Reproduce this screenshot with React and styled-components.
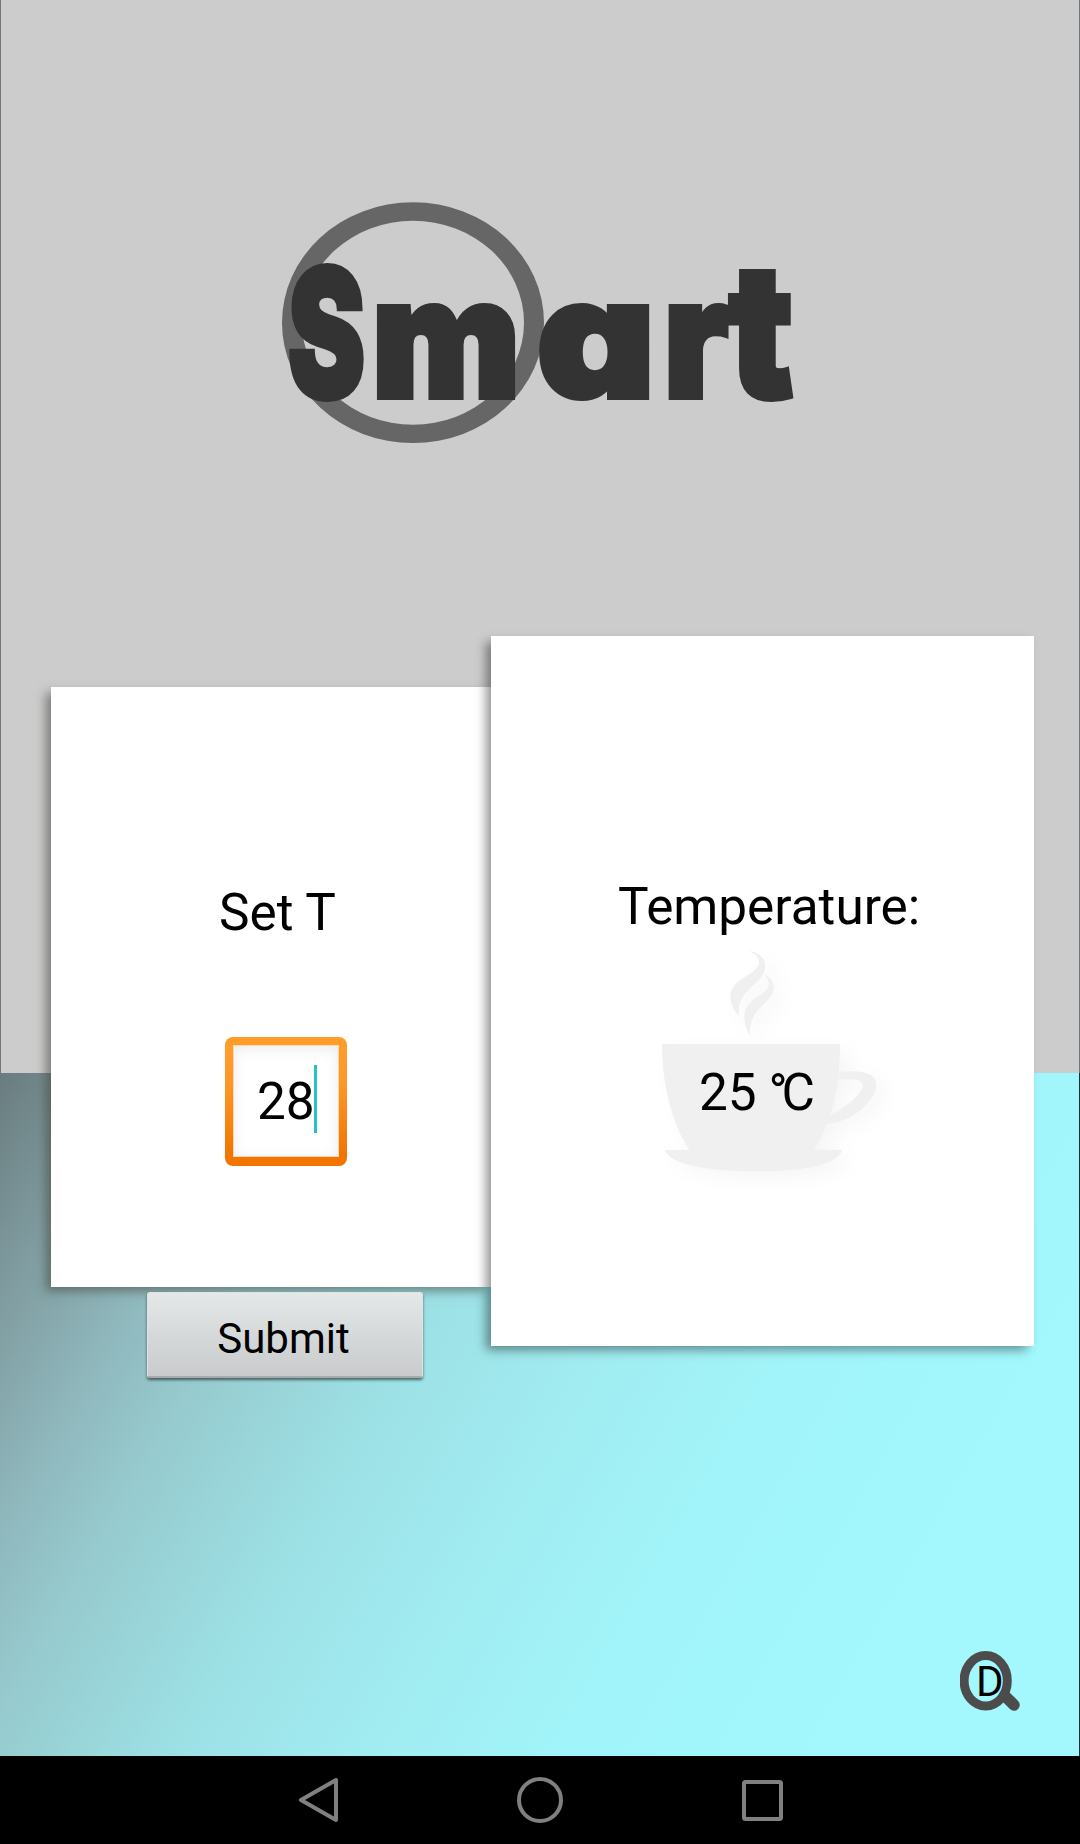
import React from "react";
import styled, { createGlobalStyle } from "styled-components";

const GlobalStyle = createGlobalStyle`
  * { box-sizing: border-box; }
  body { margin: 0; background: #000; font-family: Roboto, "Noto Sans CJK SC", sans-serif; color: #000; }
  svg { display: block; flex: none; }
`;

const Page = styled.div`
  width: 1080px;
  height: 1844px;
  display: flex;
  flex-direction: column;
  overflow: hidden;
`;

const Stage = styled.main`
  height: 1756px;
  flex: none;
  display: flex;
  flex-direction: column;
  padding: 0 1px;
  background:
    linear-gradient(#717576, #717576) left top / 1px 1073px no-repeat,
    linear-gradient(#717576 1073px, #1b3034 1073px) right top / 1px 100% no-repeat,
    linear-gradient(#ccc, #ccc) top / 100% 1073px no-repeat,
    linear-gradient(120deg, #697c7f 0%, #809ca0 9%, #8fb8bd 18%, #96cace 25%, #9ce0e4 38%, #a0ebf0 50%, #a1f5fa 66%, #a2f8fd 84%) bottom / 100% 683px no-repeat;
`;

const Header = styled.header`
  height: 636px;
  padding: 195px 0 0 275px;
`;

const Wordmark = styled.text`
  font-family: Inter, sans-serif;
  font-weight: 900;
  font-size: 165px;
  font-feature-settings: "cv11" 1;
  fill: #333;
  stroke: #333;
  stroke-width: 6px;
`;

const Tall = styled.tspan`
  font-size: ${(p) => p.$size}px;
`;

const Panels = styled.div`
  display: flex;
  align-items: flex-start;
  padding-left: 50px;
`;

const Column = styled.section`
  width: 440px;
  padding-top: 51px;
`;

const Card = styled.div`
  position: relative;
  width: ${(p) => p.$width}px;
  height: ${(p) => p.$height}px;
  padding-top: ${(p) => p.$top}px;
  background: #fff;
  box-shadow: -6px 5px 10px -1px ${(p) => p.$shadow};
`;

const Label = styled.div`
  font-size: 51.3px;
  line-height: 60px;
  white-space: nowrap;
  margin-left: ${(p) => p.$left}px;
`;

const Field = styled.div`
  width: 122px;
  height: 129px;
  margin: 94px 0 0 174px;
  padding: 8px;
  border-radius: 8px;
  background: linear-gradient(#ff9d2b, #fd9827 35%, #f27502 90%);
`;

const FieldInner = styled.div`
  height: 112px;
  padding-left: 23px;
  display: flex;
  align-items: center;
  border: 1px solid #f8d9b4;
  background: #fff;
  box-shadow: inset 0 3px 14px rgba(0, 0, 0, 0.08);
  font-size: 51.3px;
  line-height: 60px;
`;

const Digits = styled.span`
  padding-top: 2px;
`;

const Caret = styled.span`
  width: 3px;
  height: 68px;
  margin: -4px 0 0 -1px;
  background: #27bfc8;
`;

const Submit = styled.button`
  display: flex;
  align-items: center;
  justify-content: center;
  width: 276px;
  height: 86px;
  margin: 5px 0 0 96px;
  padding: 7px 3px 0 0;
  border: 1px solid #dfe3e3;
  border-bottom: 2px solid #a6abab;
  border-radius: 3px;
  background: linear-gradient(#e5e8e8, #d6d9da 50%, #c9cbcc);
  box-shadow: 0 2px 3px rgba(0, 0, 0, 0.55);
  font: 42px Roboto, sans-serif;
  color: #000;
  position: relative;
`;

const Drink = styled.div`
  position: relative;
  width: 250px;
  margin: 10px 0 0 169px;
  svg { filter: drop-shadow(9px 7px 9px rgba(0, 0, 0, 0.035)); }
`;

const Reading = styled.div`
  position: absolute;
  left: 39px;
  top: 116px;
  font-size: 51.3px;
  line-height: 60px;
  white-space: nowrap;
`;

const Unit = styled.span`
  margin-left: -1px;
  letter-spacing: -6px;
`;

const Footer = styled.footer`
  flex: 1;
  display: flex;
  justify-content: flex-end;
  padding: 273px 59px 0 0;
`;

const Lens = styled.div`
  position: relative;
  width: 60px;
  height: 60px;
`;

const LensLetter = styled.span`
  position: absolute;
  left: 16px;
  top: 7px;
  font-size: 42px;
  line-height: 48px;
`;

const NavBar = styled.nav`
  height: 88px;
  display: flex;
  align-items: center;
  gap: 179px;
  padding-left: 298px;
  background: #000;
`;

const Logo = () => (
  <svg width="530" height="260" viewBox="276 195 530 260">
    <path fill="#666" fillRule="evenodd" d="M282 322.7a131 120.4 0 1 0 262 0a131 120.4 0 1 0 -262 0ZM302 322.7a111 102 0 1 1 222 0a111 102 0 1 1 -222 0Z" />
    <Wordmark y="397">
      <Tall $size={178} x="288" textLength="77" lengthAdjust="spacingAndGlyphs">S</Tall>
      <tspan x="372" textLength="148" lengthAdjust="spacingAndGlyphs">m</tspan>
      <tspan x="537" textLength="118" lengthAdjust="spacingAndGlyphs">a</tspan>
      <tspan x="664" textLength="64" lengthAdjust="spacingAndGlyphs">r</tspan>
      <Tall $size={185} x="729" textLength="64" lengthAdjust="spacingAndGlyphs">t</Tall>
    </Wordmark>
  </svg>
);

const Cup = () => (
  <svg width="250" height="250" viewBox="60 260 750 750" overflow="visible">
    <g fill="#f0f0f0">
      <path d="M66 551H600C600 660 582 780 522 868H607C595 910 500 933 355 933C210 933 92 915 73 869H148C90 780 66 660 66 551Z" />
      <path d="M598 634C650 630 709 632 709 672C709 720 640 785 558 792L572 763C610 748 668 700 668 675C668 655 630 656 594 658Z" />
      <path d="M327 273C350 273 376 290 376 315C376 375 286 385 297 468C280 450 271 430 271 410C271 350 357 345 357 305C357 290 345 280 327 273Z" />
      <path d="M373 341C390 350 402 365 402 382C402 430 325 435 331 527C320 510 312 490 313 465C316 410 386 405 386 370C386 358 380 350 373 341Z" />
    </g>
  </svg>
);

export default function App() {
  return (
    <Page>
      <GlobalStyle />
      <Stage>
        <Header>
          <Logo />
        </Header>
        <Panels>
          <Column>
            <Card $width={441} $height={600} $top={196} $shadow="rgba(70, 70, 62, 0.6)">
              <Label $left={168}>Set T</Label>
              <Field>
                <FieldInner>
                  <Digits>28</Digits>
                  <Caret />
                </FieldInner>
              </Field>
            </Card>
            <Submit>Submit</Submit>
          </Column>
          <Card $width={543} $height={710} $top={241} $shadow="rgba(0, 0, 0, 0.42)">
            <Label $left={127}>Temperature:</Label>
            <Drink>
              <Cup />
              <Reading>
                25 <Unit>°C</Unit>
              </Reading>
            </Drink>
          </Card>
        </Panels>
        <Footer>
          <Lens>
            <svg width="60" height="60" viewBox="0 0 60 60">
              <path d="M46 46L54 54" stroke="#4c4c4c" strokeWidth="11.5" strokeLinecap="round" />
              <ellipse cx="25.7" cy="29.8" rx="21.6" ry="25.2" fill="none" stroke="#4c4c4c" strokeWidth="9" />
            </svg>
            <LensLetter>D</LensLetter>
          </Lens>
        </Footer>
      </Stage>
      <NavBar>
        <svg width="40" height="46" viewBox="0 0 40 46" fill="none" stroke="#808080" strokeWidth="4" strokeLinejoin="round">
          <path d="M38 3V43L3 23Z" />
        </svg>
        <svg width="46" height="46" viewBox="0 0 46 46" fill="none" stroke="#808080" strokeWidth="4">
          <circle cx="23" cy="23" r="21" />
        </svg>
        <svg width="41" height="41" viewBox="0 0 41 41" fill="none" stroke="#808080" strokeWidth="4">
          <rect x="2" y="2" width="37" height="37" rx="1.5" />
        </svg>
      </NavBar>
    </Page>
  );
}
